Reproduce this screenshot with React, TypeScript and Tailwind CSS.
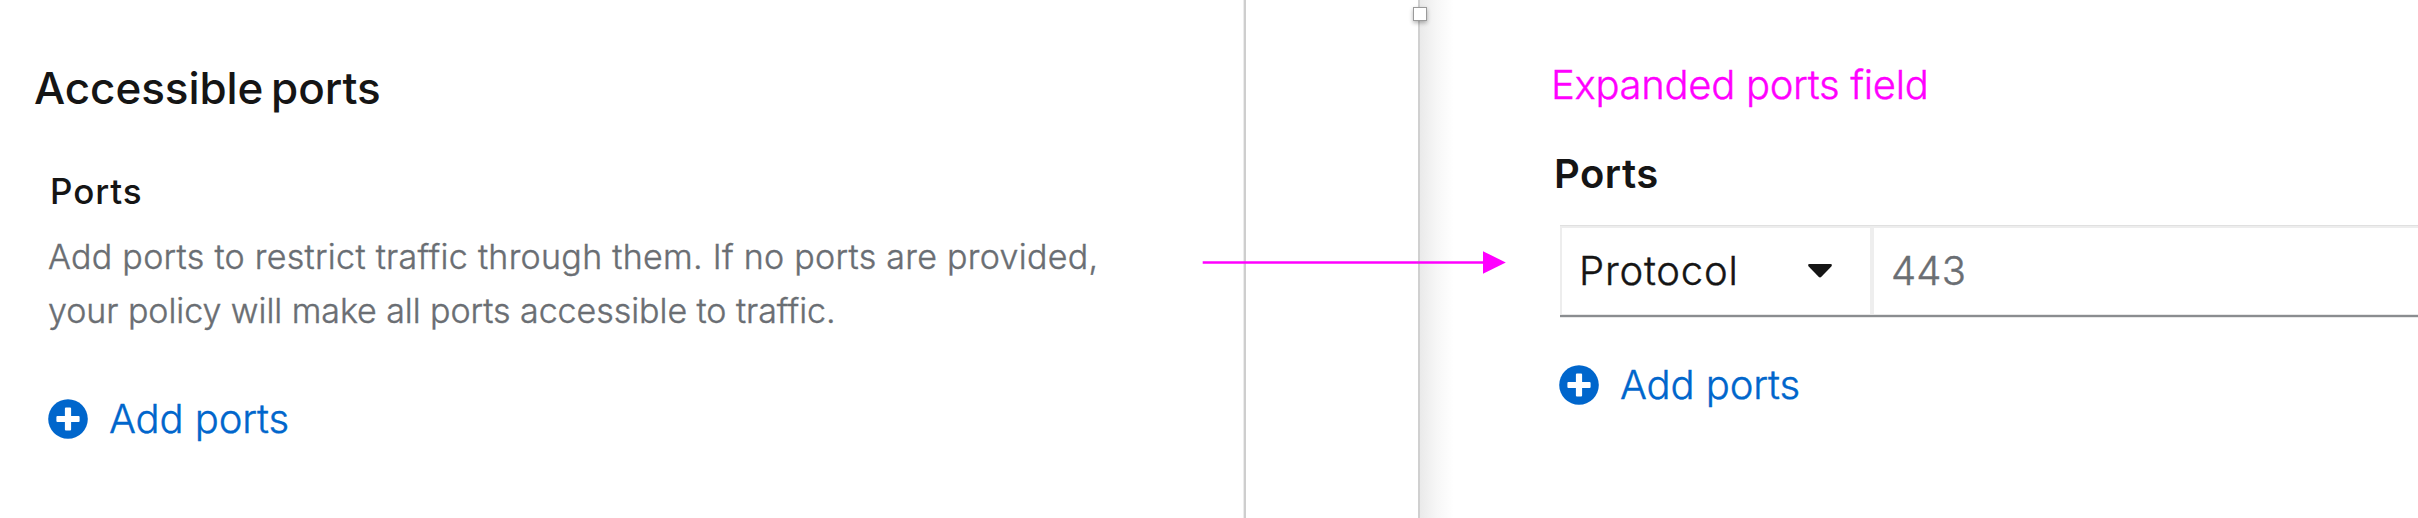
function PlusCircle() {
  return (
    <svg className="size-10 shrink-0" viewBox="0 0 40 40" aria-hidden="true">
      <circle cx="20" cy="20" r="19.8" fill="#0066cc" />
      <path
        fill="#ffffff"
        d="M17.9 8.4h4.2q1 0 1 1v7.5h7.5q1 0 1 1v4.2q0 1-1 1h-7.5v7.5q0 1-1 1h-4.2q-1 0-1-1v-7.5H9.4q-1 0-1-1v-4.2q0-1 1-1h7.5V9.4q0-1 1-1z"
      />
    </svg>
  );
}

function AddPorts() {
  return (
    <button className="flex items-start gap-[21px] text-[40px] leading-10 font-light tracking-[-0.12px] text-[#0066cc] [-webkit-text-stroke:0.4px_#0066cc]">
      <PlusCircle />
      <span className="whitespace-nowrap">Add ports</span>
    </button>
  );
}

function AccessiblePorts() {
  return (
    <section className="w-[1246px] shrink-0 pt-[58px]">
      <h1 className="ml-[34px] text-[44px] leading-[60px] font-medium tracking-[-0.07px] text-[#151515] [word-spacing:-4px]">
        Accessible ports
      </h1>
      <div className="ml-12">
        <h2 className="mt-[53px] ml-0.5 text-[35px] leading-10 font-medium tracking-[0.9px] text-[#151515]">
          Ports
        </h2>
        <p className="mt-[19px] mb-[61px] text-[34px] leading-[54px] font-light whitespace-nowrap text-[#6a6e73] [-webkit-text-stroke:0.4px_#6a6e73]">
          <span className="block tracking-[0.286px]">
            Add ports to restrict traffic through them. If no ports are provided,
          </span>
          <span className="block tracking-[-0.055px]">
            your policy will make all ports accessible to traffic.
          </span>
        </p>
        <AddPorts />
      </div>
    </section>
  );
}

function PortsField() {
  return (
    <div className="flex h-[93px] flex-col border-t border-[#e0e0e0]">
      <div className="flex h-[88px] border-t-2 border-[#ededed] text-[40px] leading-10 font-light">
        <div className="flex w-[310px] items-center justify-between border-l-2 border-[#ededed] pr-[38px] pl-[17px] tracking-[0.8px] text-[#151515] [-webkit-text-stroke:0.4px_#151515]">
          <span>Protocol</span>
          <svg className="h-[14px] w-6" viewBox="0 0 24 14" aria-hidden="true">
            <path
              fill="#151515"
              d="M1.5 0h21q1.5.1 1.4 1.3-.1.6-.6 1.2L13.4 12.8q-1.4 1.2-2.8 0L.7 2.5Q.2 1.9.1 1.3 0 .1 1.5 0z"
            />
          </svg>
        </div>
        <div className="flex grow items-center border-l-4 border-[#eeeeee] pl-[17px] tracking-[0.2px] text-[#6a6e73] [-webkit-text-stroke:0.4px_#6a6e73]">
          443
        </div>
      </div>
      <div className="h-1 border-y border-[#e8e8e8] bg-[#8a8d90]" />
    </div>
  );
}

function ExpandedPorts() {
  return (
    <section className="grow border-l-2 border-[#d0d0d0] bg-linear-to-r from-[#eaeaea] via-[#f7f7f7] via-[17px] to-white to-[34px] pt-[65px]">
      <h2 className="ml-[131px] text-[40px] leading-10 font-light tracking-[-0.3px] text-[#ff00ff] [-webkit-text-stroke:0.4px_#ff00ff]">
        Expanded ports field
      </h2>
      <h3 className="mt-[49px] ml-[134px] text-[40px] leading-10 font-semibold tracking-[0.5px] text-[#151515]">
        Ports
      </h3>
      <div className="mt-[31px] mb-[47px] ml-[140px]">
        <PortsField />
      </div>
      <div className="ml-[139px]">
        <AddPorts />
      </div>
    </section>
  );
}

export default function App() {
  return (
    <main className="relative flex h-[518px] w-[2418px] overflow-hidden bg-white font-['Inter',sans-serif]">
      <AccessiblePorts />
      <div className="-ml-[3px] flex w-[175px] shrink-0 border-l border-[#ececec]">
        <div className="w-0.5 bg-[#cecece]" />
      </div>
      <ExpandedPorts />

      <svg className="absolute top-[250px] left-[1202px] h-[25px] w-[305px]" viewBox="0 0 305 25" aria-hidden="true">
        <path d="M.7 12.5H282" stroke="#ff00ff" strokeWidth="2.7" />
        <path d="M281 1.2l22.8 11.3L281 23.8z" fill="#ff00ff" />
        <path d="M216 11v3" stroke="#b080b0" strokeOpacity=".5" />
      </svg>
      <div className="absolute top-[7px] left-[1413px] size-[14px] border border-[#9a9a9a] bg-white shadow-[0_2px_4px_rgba(0,0,0,0.3)]" />
    </main>
  );
}
